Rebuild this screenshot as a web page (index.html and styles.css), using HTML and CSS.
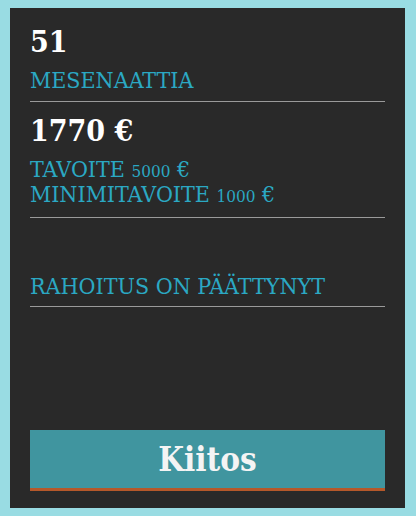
FILE: index.html
```html
<!DOCTYPE html>
<html lang="fi">
<head>
<meta charset="utf-8">
<link rel="stylesheet" href="styles.css">
</head>
<body>
<div class="panel">
  <div class="stat stat-first">
    <div class="big">51</div>
    <div class="label">MESENAATTIA</div>
  </div>
  <div class="stat stat-money">
    <div class="big">1770 €</div>
    <div class="label">TAVOITE <span class="num">5000</span> €</div>
    <div class="label">MINIMITAVOITE <span class="num">1000</span> €</div>
  </div>
  <div class="stat stat-status">
    <div class="label">RAHOITUS ON PÄÄTTYNYT</div>
  </div>
  <div class="spacer"></div>
  <div class="button">Kiitos</div>
</div>
</body>
</html>
```
FILE: styles.css
```css
html, body {
  margin: 0;
  padding: 0;
  background: #99dce3;
}
body {
  padding: 8px 11px 8px 10px;
  font-family: "DejaVu Serif Condensed", "DejaVu Serif", serif;
}
.panel {
  background: #292929;
  height: 500px;
  box-sizing: border-box;
  padding: 16px 20px 17px;
  display: flex;
  flex-direction: column;
}
.stat {
  border-bottom: 1px solid #9a9a9a;
}
.stat-first {
  padding-bottom: 8px;
}
.stat-money {
  padding-top: 11px;
  padding-bottom: 10px;
}
.stat-status {
  padding-top: 56px;
  padding-bottom: 7px;
}
.big {
  color: #ffffff;
  font-weight: bold;
  font-size: 30px;
  line-height: 36px;
  margin-bottom: 8px;
}
.label {
  color: #2ba8c3;
  font-size: 23px;
  line-height: 25px;
}
.num {
  font-size: 17px;
  line-height: 1;
}
.spacer {
  flex: 1;
}
.button {
  background: #40959f;
  border-bottom: 3px solid #b5582a;
  color: #f4f4f4;
  text-align: center;
  font-weight: bold;
  font-size: 33px;
  height: 56px;
  padding-top: 2px;
  line-height: 56px;
}
```
